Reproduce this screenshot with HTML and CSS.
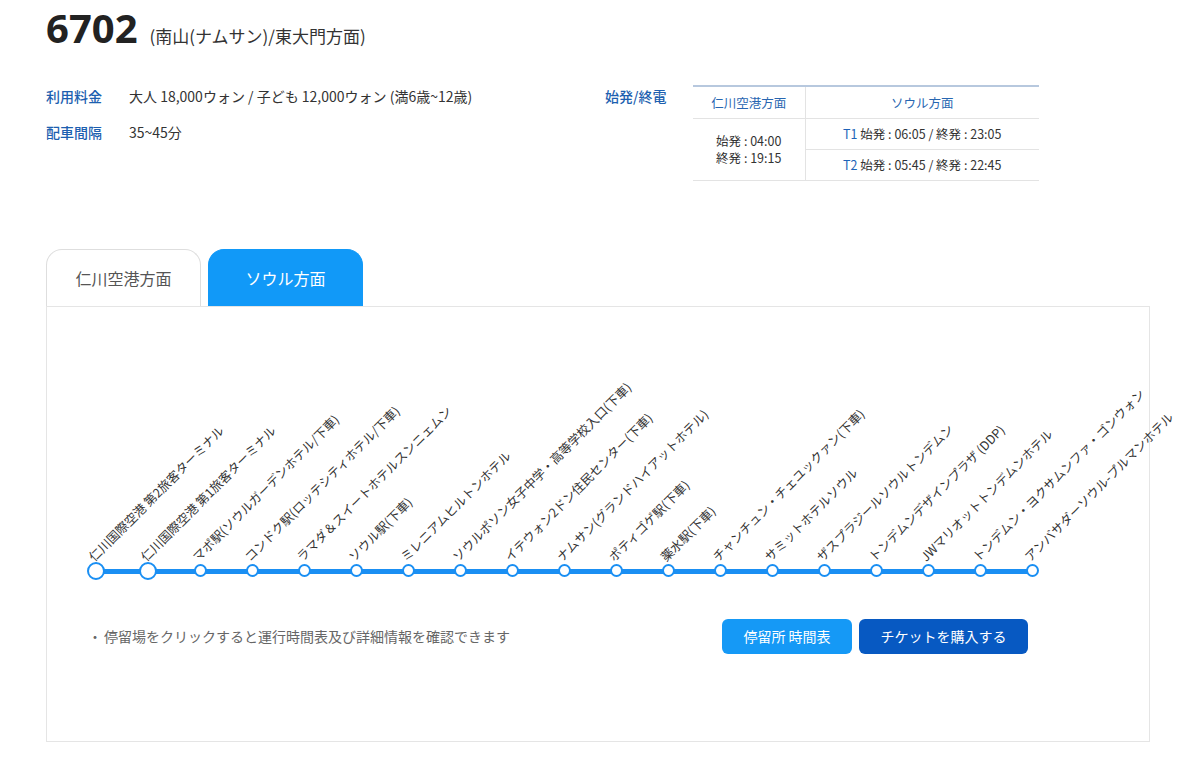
FILE: index.html
```html
<!DOCTYPE html>
<html lang="ja">
<head>
<meta charset="utf-8">
<title>6702</title>
<link rel="stylesheet" href="styles.css">
</head>
<body>
<div class="page">
  <h1 class="title"><span class="num">6702</span><span class="dest">(南山(ナムサン)/東大門方面)</span></h1>

  <div class="info">
    <div class="fare">
      <div class="row"><span class="lbl">利用料金</span><span class="val">大人 18,000ウォン / 子ども 12,000ウォン (満6歳~12歳)</span></div>
      <div class="row"><span class="lbl">配車間隔</span><span class="val">35~45分</span></div>
    </div>
    <div class="tlabel">始発/終電</div>
    <table class="times">
      <thead>
        <tr><th class="c1">仁川空港方面</th><th>ソウル方面</th></tr>
      </thead>
      <tbody>
        <tr><td class="c1" rowspan="2">始発 : 04:00<br>終発 : 19:15</td><td><span class="t">T1</span> 始発 : 06:05 / 終発 : 23:05</td></tr>
        <tr><td><span class="t">T2</span> 始発 : 05:45 / 終発 : 22:45</td></tr>
      </tbody>
    </table>
  </div>

  <div class="tabs">
    <div class="tab">仁川空港方面</div>
    <div class="tab active">ソウル方面</div>
  </div>

  <div class="panel">
    <div class="route">
      <div class="st big"><span class="name">仁川国際空港 第2旅客ターミナル</span></div>
      <div class="st big"><span class="name">仁川国際空港 第1旅客ターミナル</span></div>
      <div class="st"><span class="name">マポ駅(ソウルガーデンホテル/下車)</span></div>
      <div class="st"><span class="name">コンドク駅(ロッテシティホテル/下車)</span></div>
      <div class="st"><span class="name">ラマダ＆スイートホテルスンニェムン</span></div>
      <div class="st"><span class="name">ソウル駅(下車)</span></div>
      <div class="st"><span class="name">ミレニアムヒルトンホテル</span></div>
      <div class="st"><span class="name">ソウルポソン女子中学・高等学校入口(下車)</span></div>
      <div class="st"><span class="name">イテウォン2ドン住民センター(下車)</span></div>
      <div class="st"><span class="name">ナムサン(グランドハイアットホテル)</span></div>
      <div class="st"><span class="name">ポティゴゲ駅(下車)</span></div>
      <div class="st"><span class="name">薬水駅(下車)</span></div>
      <div class="st"><span class="name">チャンチュン・チェユックァン(下車)</span></div>
      <div class="st"><span class="name">サミットホテルソウル</span></div>
      <div class="st"><span class="name">ザスプラジールソウルトンデムン</span></div>
      <div class="st"><span class="name">トンデムンデザインプラザ (DDP)</span></div>
      <div class="st"><span class="name">JWマリオットトンデムンホテル</span></div>
      <div class="st"><span class="name">トンデムン・ヨクサムンファ・ゴンウォン</span></div>
      <div class="st"><span class="name">アンバサダーソウル-プルマンホテル</span></div>
    </div>

    <div class="bottom">
      <p class="note"><span class="dot">・</span>停留場をクリックすると運行時間表及び詳細情報を確認できます</p>
      <div class="btns">
        <button class="btn light">停留所 時間表</button>
        <button class="btn dark">チケットを購入する</button>
      </div>
    </div>
  </div>
</div>
</body>
</html>
```

FILE: styles.css
```css
* { box-sizing: border-box; }
html, body { margin: 0; padding: 0; background: #fff; }
body {
  font-family: "Noto Sans CJK JP", "Noto Sans", sans-serif;
  color: #333;
}
.page {
  width: 1200px;
  padding: 0 50px 0 46px;
}
.title {
  margin: 0;
  padding-top: 8px;
  display: flex;
  align-items: baseline;
  gap: 12px;
  line-height: 1;
  font-weight: normal;
}
.title .num {
  font-family: "Noto Sans", "Noto Sans CJK JP", sans-serif;
  font-size: 40px;
  line-height: 40px;
  font-weight: bold;
  color: #222;
}
.title .dest {
  font-size: 17px;
  line-height: 20px;
  color: #333;
}
.info {
  margin-top: 37px;
  display: flex;
  align-items: flex-start;
}
.fare {
  width: 559px;
  padding-top: 1px;
  display: flex;
  flex-direction: column;
  gap: 16px;
}
.row {
  display: flex;
  font-size: 14px;
  line-height: 20px;
}
.lbl {
  width: 83px;
  color: #1d5fb0;
  font-weight: 500;
}
.val { color: #333; }
.tlabel {
  width: 88px;
  padding-top: 1px;
  font-size: 14px;
  line-height: 20px;
  color: #1d5fb0;
  font-weight: 500;
}
.times {
  width: 346px;
  border-collapse: collapse;
  border-top: 2px solid #b7c8de;
  font-size: 12.5px;
  color: #333;
}
.times th {
  height: 32px;
  font-weight: normal;
  color: #2866b1;
  text-align: center;
  border-bottom: 1px solid #e3e3e3;
  padding: 0;
}
.times td {
  height: 31px;
  text-align: center;
  border-bottom: 1px solid #e3e3e3;
  padding: 0;
  line-height: 17px;
}
.times .c1 {
  width: 112px;
  border-right: 1px solid #e3e3e3;
}
.times .t { color: #1d63b8; }

.tabs {
  margin-top: 68px;
  display: flex;
  gap: 7px;
}
.tab {
  width: 155px;
  height: 57px;
  display: flex;
  align-items: center;
  justify-content: center;
  font-size: 16px;
  color: #555;
  border: 1px solid #dedede;
  border-bottom: none;
  border-radius: 16px 16px 0 0;
  background: #fff;
}
.tab.active {
  background: #1199f8;
  border-color: #1199f8;
  color: #fff;
}
.panel {
  height: 436px;
  border: 1px solid #e5e5e5;
  padding: 258px 0 0 23px;
}
.route {
  position: relative;
  display: flex;
  width: 988px;
  height: 12px;
}
.route::before {
  content: "";
  position: absolute;
  left: 26px;
  right: 26px;
  top: 4px;
  height: 5px;
  background: #1a8ff3;
}
.st {
  position: relative;
  flex: 0 0 52px;
  height: 12px;
  display: flex;
  align-items: center;
  justify-content: center;
}
.st::after {
  content: "";
  position: relative;
  width: 9px;
  height: 9px;
  border: 2px solid #1a8ff3;
  border-radius: 50%;
  background: #fff;
}
.st.big::after {
  width: 14px;
  height: 14px;
}
.name {
  position: absolute;
  left: calc(50% - 1px);
  bottom: calc(100% + 2px);
  transform-origin: left bottom;
  transform: rotate(-45deg);
  white-space: nowrap;
  font-size: 12.5px;
  line-height: 13px;
  color: #333;
}
.bottom {
  margin: 42px 121px 0 18px;
  display: flex;
  align-items: center;
  justify-content: space-between;
}
.note {
  margin: 0;
  font-size: 14px;
  color: #666;
}
.dot { margin-right: 2px; }
.btns {
  display: flex;
  gap: 7px;
}
.btn {
  height: 35px;
  border: none;
  border-radius: 6px;
  font-family: inherit;
  font-size: 14px;
  color: #fff;
  padding: 0;
}
.btn.light { width: 130px; background: #1599f6; }
.btn.dark { width: 169px; background: #0759c2; }
```
